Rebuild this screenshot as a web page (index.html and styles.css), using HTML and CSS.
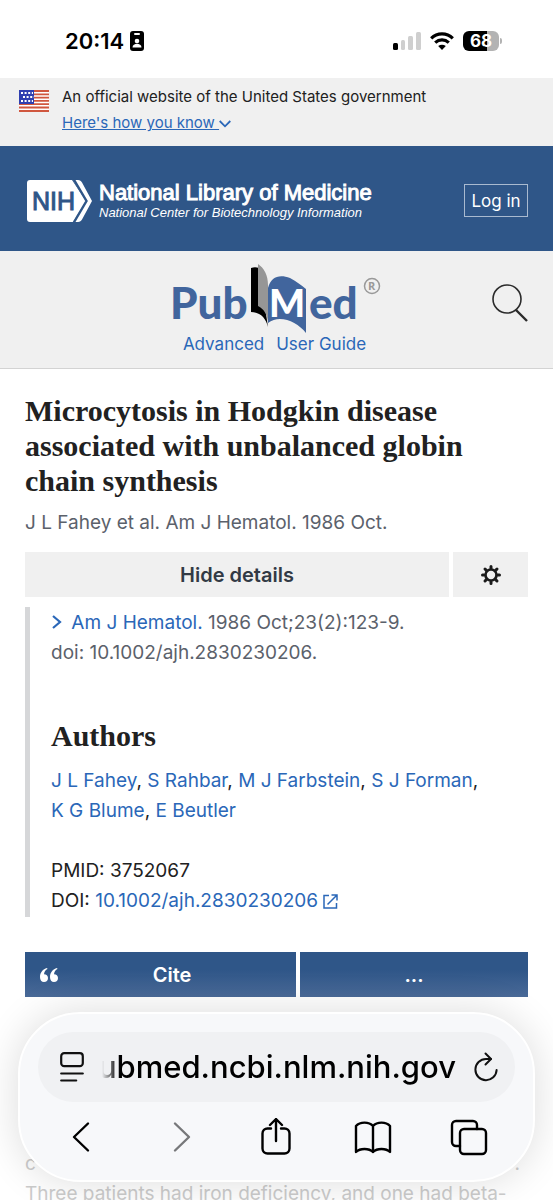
FILE: index.html
```
<!DOCTYPE html>
<html lang="en">
<head>
  <meta charset="UTF-8">
  <meta name="viewport" content="width=device-width, initial-scale=1.0">
  <title>Microcytosis in Hodgkin disease - PubMed</title>
  <link rel="stylesheet" href="styles.css">
</head>
<body>
<div class="screen">
  <div class="status-bar">
    <div class="status-left">
      <span class="clock">20:14</span>
      <svg width="14" height="20" viewBox="0 0 14 20">
        <rect width="14" height="20" rx="3"/>
        <rect x="4" y="2" width="6" height="2" rx="1" fill="#fff"/>
        <circle cx="7" cy="10" r="2.3" fill="#fff"/>
        <path d="M2.5 16.5c0-5 9-5 9 0z" fill="#fff"/>
      </svg>
    </div>
    <div class="status-right">
      <svg width="28" height="18" viewBox="0 0 28 18" fill="#cfcfcf">
        <rect x="0" y="11" width="5" height="7" rx="1.5" fill="#000"/>
        <rect x="8" y="8" width="4" height="10" rx="1.5"/>
        <rect x="15" y="4" width="5" height="14" rx="1.5"/>
        <rect x="23" y="0" width="5" height="18" rx="1.5"/>
      </svg>
      <svg width="24" height="18" viewBox="0 0 24 18" fill="none" stroke="#000" stroke-width="3.2">
        <path d="M1.2 6.3c6-5.8 15.6-5.8 21.6 0"/>
        <path d="M5.2 10.6c4-3.7 9.6-3.7 13.6 0"/>
        <path d="M12 18l-3.8-3.9c2.3-1.9 5.3-1.9 7.6 0z" fill="#000" stroke="none"/>
      </svg>
      <div class="battery">68</div>
    </div>
  </div>

  <section class="gov-banner">
    <svg class="flag" width="30" height="22" viewBox="0 0 30 22">
      <rect width="30" height="22" fill="#fff"/>
      <path d="M0 1h30M0 4.3h30M0 7.6h30M0 10.9h30M0 14.2h30M0 17.5h30M0 21h30" stroke="#d0573f" stroke-width="1.8"/>
      <rect width="15" height="14" fill="#2f3fb0"/>
      <path d="M2 3h12M4 7h11M2 11h12" stroke="#fff" stroke-width="2" stroke-dasharray="2 1.6"/>
    </svg>
    <div>
      <p>An official website of the United States government</p>
      <a class="know" href="#"><span>Here's how you know&nbsp;</span><svg width="12" height="8" viewBox="0 0 12 8" fill="none" stroke="#2a67b8" stroke-width="1.8"><path d="M.7 1L6 6.3 11.3 1"/></svg></a>
    </div>
  </section>

  <header class="nih-header">
    <a class="nih-logo" href="#">
      <svg width="66" height="44" viewBox="0 0 66 44">
        <path d="M4 1H46L60 22 47 43H4a3 3 0 0 1-3-3V4a3 3 0 0 1 3-3z" fill="#fff"/>
        <path d="M47 1h5c2 0 3 1 4 2.5L66 22 56 40.5C55 42 54 43 52 43h-5L60 22z" fill="#fff"/>
        <path d="M47.5 0L60.5 22 47.5 44" fill="none" stroke="#2f5688" stroke-width="2.4"/>
        <text class="nih-text" x="6" y="31">NIH</text>
      </svg>
      <span class="nih-names">
        <strong>National Library of Medicine</strong>
        <em>National Center for Biotechnology Information</em>
      </span>
    </a>
    <button class="login">Log in</button>
  </header>

  <div class="search-header">
    <div class="brand">
      <a href="#" aria-label="PubMed">
        <svg width="212" height="72" viewBox="0 0 212 72">
          <text class="pub-text" x="-1" y="56">Pub</text>
          <path d="M80 5c3-1 5-1 8 0l9 59c-2-9-8-15-17-15z" fill="#000"/>
          <path d="M87 1c6 4 10 11 10 21v37c-1-8-4-13-10-16z" fill="#969696"/>
          <path d="M97 25c3-12 12-14 22-10 6 3 11 7 16 11v44c-9-11-26-19-38-10z" fill="#41659d"/>
          <text class="med-m" x="98" y="54">M</text>
          <text class="pub-text" x="138" y="56">ed</text>
          <circle cx="201" cy="23" r="7.5" fill="none" stroke="#999" stroke-width="1.5"/>
          <text class="reg" x="197" y="27">R</text>
        </svg>
      </a>
      <nav>
        <a href="#">Advanced</a>
        <a href="#">User Guide</a>
      </nav>
    </div>
    <button class="search-btn" aria-label="Search">
      <svg width="36" height="38" viewBox="0 0 36 38" fill="none" stroke="#2b2b2b" stroke-width="1.6">
        <circle cx="15" cy="15" r="14"/>
        <path d="M24 26l11 11" stroke-width="2.4"/>
      </svg>
    </button>
  </div>

  <main>
    <h1>Microcytosis in Hodgkin disease associated with unbalanced globin chain synthesis</h1>
    <p class="short-cit">J L Fahey et al. Am J Hematol. 1986 Oct.</p>

    <div class="detail-buttons">
      <button class="hide-btn">Hide details</button>
      <button class="gear-btn" aria-label="Settings">
        <svg width="20" height="20" viewBox="0 0 20 20" fill="none" stroke="#1b1b1b">
          <circle cx="10" cy="10" r="5.5" stroke-width="2.6"/>
          <path stroke-width="3" stroke-linecap="round" d="M10 1.5v2M10 16.5v2M1.5 10h2M16.5 10h2M4 4l1.4 1.4M14.6 14.6L16 16M4 16l1.4-1.4M14.6 5.4L16 4"/>
        </svg>
      </button>
    </div>

    <section class="details">
      <p class="cit">
        <svg width="12" height="16" viewBox="0 0 12 16" fill="none" stroke="#2a67b8" stroke-width="2.2"><path d="M2 2l7 6-7 6"/></svg>
        <a href="#">Am J Hematol.</a> 1986 Oct;23(2):123-9.<br>
        doi: 10.1002/ajh.2830230206.
      </p>
      <h2>Authors</h2>
      <p class="authors">
        <a href="#">J L Fahey</a>, <a href="#">S Rahbar</a>, <a href="#">M J Farbstein</a>, <a href="#">S J Forman</a>, <a href="#">K G Blume</a>, <a href="#">E Beutler</a>
      </p>
      <p class="ids">
        PMID: 3752067<br>
        DOI: <a href="#">10.1002/ajh.2830230206
        <svg width="15" height="15" viewBox="0 0 15 15" fill="none" stroke="#2a67b8" stroke-width="1.5"><path d="M6 1.5H1v12.5h12.5V9M8.5 1H14v5.5M14 1L4.5 10.5"/></svg></a>
      </p>
    </section>

    <div class="actions">
      <button class="cite">
        <svg width="18" height="14" viewBox="0 0 18 14" fill="#fff">
          <path d="M7 0C3 1 0 4.5 0 9c0 3 1.500 5 4 5s4-1.600 4-4-1.600-3.800-4-3.800C4.300 3.500 5.500 2 7.500 1z"/>
          <path d="M17 0c-4 1-7 4.500-7 9 0 3 1.500 5 4 5s4-1.600 4-4-1.600-3.800-4-3.800c.3-2.700 1.500-4.200 3.500-5.200z"/>
        </svg>
        <span>Cite</span>
      </button>
      <button>...</button>
    </div>

    <div class="abstract">
      <p class="edge-line"><span>c</span><span>.</span></p>
      <p>Three patients had iron deficiency, and one had beta-</p>
    </div>
  </main>

  <div class="browser-bar">
    <div class="address">
      <svg width="24" height="30" viewBox="0 0 24 30" fill="none" stroke="#111" stroke-width="2.2" stroke-linecap="round">
        <rect x="1.2" y="1.2" width="21.6" height="13" rx="3"/>
        <path d="M1.2 21.500h21.600M1.200 28.500h15"/>
      </svg>
      <span class="url">ubmed.ncbi.nlm.nih.gov</span>
      <button aria-label="Reload">
        <svg width="24" height="30" viewBox="0 0 24 30" fill="none" stroke="#111" stroke-width="2" stroke-linecap="round">
          <path d="M17 7H12A10.600 10.600 0 1 0 22.600 18"/>
          <path d="M11.500 1.500L17 7l-5.500 5.500" stroke-linejoin="round"/>
        </svg>
      </button>
    </div>
    <div class="tools">
      <button aria-label="Back"><svg width="38" height="38" viewBox="0 0 38 38"><path d="M24 5.500L10 19l14 13.500"/></svg></button>
      <button aria-label="Forward" class="forward"><svg width="38" height="38" viewBox="0 0 38 38"><path d="M14 5.500L28 19 14 32.500"/></svg></button>
      <button aria-label="Share"><svg width="38" height="38" viewBox="0 0 38 38"><path d="M14 10.500h-3.500a5 5 0 0 0-5 5v15a5 5 0 0 0 5 5h17a5 5 0 0 0 5-5v-15a5 5 0 0 0-5-5H24M19 23V1M13 7l6-6 6 6"/></svg></button>
      <button aria-label="Bookmarks"><svg width="38" height="38" viewBox="0 0 38 38"><path d="M19 8C15 3.500 6 3.500 2 8v26c4-4 13-4 17 0 4-4 13-4 17 0V8c-4-4.500-13-4.500-17 0zM19 8v26"/></svg></button>
      <button aria-label="Tabs"><svg width="38" height="38" viewBox="0 0 38 38"><rect x="10" y="11" width="26" height="25" rx="4"/><path d="M10 28H6a4 4 0 0 1-4-4V7a4 4 0 0 1 4-4h17a4 4 0 0 1 4 4v4"/></svg></button>
    </div>
  </div>
</div>
</body>
</html>
```
FILE: styles.css
```
* {
  box-sizing: border-box;
}

body {
  margin: 0;
  font-family: Inter, "Liberation Sans", sans-serif;
  font-size: 19px;
  line-height: 30px;
  color: #212121;
  background: #fff;
}

h1, h2, p {
  margin: 0;
}

a {
  color: #2a67b8;
  text-decoration: none;
}

button {
  font: inherit;
  border: none;
  border-radius: 0;
  background: none;
  padding: 0;
  cursor: pointer;
}

svg {
  flex-shrink: 0;
}

.screen {
  position: relative;
  height: 100vh;
  overflow: hidden;
}

/* phone status bar */
.status-bar {
  display: flex;
  justify-content: space-between;
  align-items: center;
  height: 78px;
  padding: 4px 54px 0 65px;
}

.status-left, .status-right {
  display: flex;
  align-items: center;
  gap: 6px;
}

.status-right {
  gap: 9px;
}

.clock {
  font-size: 22px;
  font-weight: 600;
  color: #000;
}

.battery {
  position: relative;
  width: 36px;
  height: 20px;
  border-radius: 6px;
  background: linear-gradient(to right, #000 68%, #b3b3b3 68%);
  color: #fff;
  font-size: 17px;
  font-weight: 700;
  line-height: 20px;
  text-align: center;
}

.battery::after {
  content: "";
  position: absolute;
  right: -3px;
  top: 7px;
  width: 2px;
  height: 6px;
  border-radius: 0 2px 2px 0;
  background: #b3b3b3;
}

/* government banner */
.gov-banner {
  display: flex;
  gap: 13px;
  height: 68px;
  padding: 6px 19px;
  background: #f0f0f0;
  font-size: 15px;
  line-height: 26px;
}

.flag {
  margin-top: 6px;
}

.know span {
  text-decoration: underline;
}

/* NIH header */
.nih-header {
  display: flex;
  justify-content: space-between;
  align-items: center;
  height: 105px;
  padding: 4px 25px 0 26px;
  background: #2f5688;
}

.nih-logo {
  display: flex;
  align-items: center;
  gap: 7px;
  color: #fff;
  font-family: "Liberation Sans", sans-serif;
}

.nih-text {
  font: 25px "Liberation Sans", sans-serif;
  fill: #2f5688;
  stroke: #2f5688;
  stroke-width: 1px;
}

.nih-names {
  padding-top: 2px;
}

.nih-names strong, .nih-names em {
  display: block;
  white-space: nowrap;
}

.nih-names strong {
  font-size: 22px;
  font-weight: 400;
  line-height: 22px;
  -webkit-text-stroke: 1px #fff;
}

.nih-names em {
  font-size: 13px;
  line-height: 18px;
}

.login {
  width: 64px;
  height: 33px;
  border: 1px solid #a9bad0;
  color: #fff;
  font-size: 17px;
}

/* PubMed header */
.search-header {
  display: grid;
  grid-template-columns: 36px 1fr 36px;
  height: 118px;
  padding: 12px 25px 0;
  background: #f0f0f0;
  border-bottom: 1px solid #d3d3d3;
}

.brand {
  grid-column: 2;
  display: flex;
  flex-direction: column;
  align-items: center;
}

.brand > a {
  height: 70px;
}

.brand nav {
  display: flex;
  gap: 12px;
  padding-right: 4px;
  font-size: 17px;
  line-height: 22px;
}

.pub-text {
  font: 900 44px Lato, sans-serif;
  fill: #41659d;
}

.med-m {
  font: 900 38px Lato, sans-serif;
  fill: #fff;
}

.reg {
  font: bold 11px "Open Sans", sans-serif;
  fill: #999;
}

.search-btn {
  align-self: start;
  margin-top: 21px;
}

/* article */
main {
  padding: 24px 25px 0;
}

h1, h2 {
  font-family: "Liberation Serif", serif;
  font-weight: 700;
}

h1 {
  font-size: 30px;
  line-height: 35px;
}

.short-cit {
  margin-top: 10px;
  color: #5b616b;
}

.detail-buttons {
  display: flex;
  gap: 4px;
  margin-top: 14px;
}

.detail-buttons button {
  display: flex;
  align-items: center;
  justify-content: center;
  height: 45px;
  background: #f0f0f0;
  color: #323a45;
  font-size: 20px;
  font-weight: 600;
}

.detail-buttons .hide-btn {
  flex: 1;
}

.detail-buttons .gear-btn {
  width: 75px;
}

.details {
  margin-top: 10px;
  padding: 1px 0 1px 21px;
  border-left: 5px solid #d6d7d9;
}

.cit {
  color: #5b616b;
}

.cit svg {
  margin-right: 3px;
  vertical-align: -1px;
}

h2 {
  margin-top: 53px;
  font-size: 30px;
  line-height: 30px;
}

.authors {
  margin-top: 15px;
}

.authors a {
  white-space: nowrap;
}

.ids {
  margin-top: 30px;
}

.ids svg {
  vertical-align: -2px;
}

.actions {
  display: grid;
  grid-template-columns: 271fr 228fr;
  gap: 4px;
  margin-top: 35px;
}

.actions button {
  height: 45px;
  background: linear-gradient(#2f5688 40%, #4a6a98);
  color: #fff;
  font-size: 20px;
  font-weight: 600;
}

.actions .cite {
  display: flex;
  align-items: center;
  gap: 5px;
  padding: 0 15px;
}

.cite span {
  flex: 1;
}

.abstract {
  margin-top: 152px;
  color: #ccc;
}

.edge-line {
  display: flex;
  justify-content: space-between;
  padding-right: 8px;
}

/* floating browser toolbar */
.browser-bar {
  position: absolute;
  left: 18px;
  right: 18px;
  bottom: 18px;
  padding: 18px;
  height: 170px;
  border: 2px solid #fff;
  border-radius: 62px;
  background: #f7f8fa;
  box-shadow: 0 0 40px rgba(0, 0, 0, 0.14);
}

.address {
  display: flex;
  align-items: center;
  gap: 18px;
  height: 70px;
  padding: 0 17px 0 22px;
  border-radius: 35px;
  background: #f0f1f3;
}

.url {
  flex: 1;
  display: flex;
  justify-content: flex-end;
  overflow: hidden;
  color: #000;
  font-size: 31px;
  line-height: 40px;
  font-weight: 500;
  white-space: nowrap;
  mask-image: linear-gradient(to right, transparent, #000 16px);
}

.address button {
  display: flex;
}

.tools {
  display: flex;
  justify-content: space-between;
  padding: 16px 27px 0 26px;
}

.tools button {
  display: flex;
}

.tools svg {
  fill: none;
  stroke: #000;
  stroke-width: 2.4;
  stroke-linecap: round;
  stroke-linejoin: round;
}

.tools .forward svg {
  stroke: #77787a;
}
```
